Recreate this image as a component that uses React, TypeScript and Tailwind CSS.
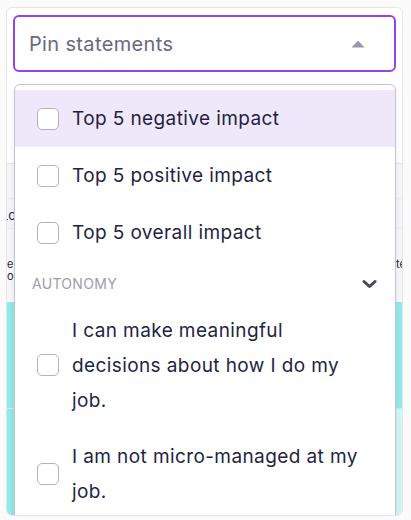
import React from "react";

function Checkbox() {
  return (
    <span className="block h-[22px] w-[22px] shrink-0 rounded-[5px] border-[1.5px] border-[#b3b0c2] bg-white" />
  );
}

function Row({
  children,
  highlight,
  multi,
}: {
  children: React.ReactNode;
  highlight?: boolean;
  multi?: boolean;
}) {
  return (
    <div
      className={
        "flex items-center gap-[13px] pl-[22px] pr-[27px] py-[10.5px] " +
        (highlight ? "bg-[#efe8fa]" : "bg-white")
      }
    >
      <Checkbox />
      <span
        className={
          "text-[19px] tracking-[0.4px] text-[#241f43] " + (multi ? "leading-[35px]" : "leading-[36px]")
        }
      >
        {children}
      </span>
    </div>
  );
}

export default function App() {
  return (
    <div
      className="h-[520px] w-[411px] overflow-hidden bg-[#fbfbfc] pt-[7px] pl-[6px]"
      style={{ fontFamily: "Inter, 'Noto Sans', sans-serif" }}
    >
      <div className="relative h-[509px] w-[397px] overflow-hidden rounded-[6px] border border-[#e6e6ea] bg-white">
        <div className="px-[6px] pt-[7px]">
          <div className="flex h-[57px] items-center justify-between rounded-[6px] border-2 border-[#8f45e8] bg-white pl-[14px] pr-[29px]">
            <span className="text-[20px] tracking-[0.35px] text-[#6b6880]">Pin statements</span>
            <svg width="14" height="8" viewBox="0 0 14 8">
              <path d="M7 0.5 L13.5 7.5 L0.5 7.5 Z" fill="#9a97a8" />
            </svg>
          </div>
        </div>
        {/* background table */}
        <div className="h-[91px]" />
        <div className="h-[35px] border-t border-[#e4e4e8] bg-[#f6f6f7]" />
        <div className="flex h-[30px] items-center border-t border-[#ece8f6] bg-[#f5f3fb] pt-[4px] text-[13px] text-[#2a2547]">
          <div className="w-[7px] overflow-hidden whitespace-nowrap">
            <span className="ml-[-6px]">Lo</span>
          </div>
        </div>
        <div className="flex h-[74px] items-center justify-between border-t border-[#ebebef] bg-[#f7f7f8] pt-[8px] text-[11px] leading-[12px] text-[#2a2547]">
          <div className="flex w-[7px] flex-col overflow-hidden whitespace-nowrap">
            <span>e</span>
            <span>ou</span>
          </div>
          <div className="w-[6px] overflow-hidden whitespace-nowrap pb-[12px]">te</div>
        </div>
        <div className="h-[106px] bg-[#92e9e9]" />
        <div className="flex h-[108px] border-t border-[#c9eded] bg-[#d0f6f6]">
          <div className="w-[200px] bg-[#92e9e9]" />
        </div>

        {/* dropdown menu */}
        <div className="absolute left-[7px] right-[6px] top-[76px] bottom-[-20px] rounded-[6px] border border-[#c5c2d1] bg-white pt-[5px] shadow-[0_2px_6px_rgba(40,30,80,0.08)]">
          <Row highlight>Top 5 negative impact</Row>
          <Row>Top 5 positive impact</Row>
          <Row>Top 5 overall impact</Row>
          <div className="flex h-[41px] items-center justify-between pl-[17px] pr-[18px] pt-[4px]">
            <span className="text-[14px] tracking-[0.3px] text-[#9e9cab]">AUTONOMY</span>
            <svg width="15" height="10" viewBox="0 0 15 10">
              <path d="M2 2.5 L7.5 7.5 L13 2.5" fill="none" stroke="#4a4562" strokeWidth="3" strokeLinecap="round" strokeLinejoin="round" />
            </svg>
          </div>
          <Row multi>
            I can make meaningful
            <br />
            decisions about how I do my
            <br />
            job.
          </Row>
          <Row multi>
            I am not micro-managed at my
            <br />
            job.
          </Row>
        </div>
      </div>
    </div>
  );
}
